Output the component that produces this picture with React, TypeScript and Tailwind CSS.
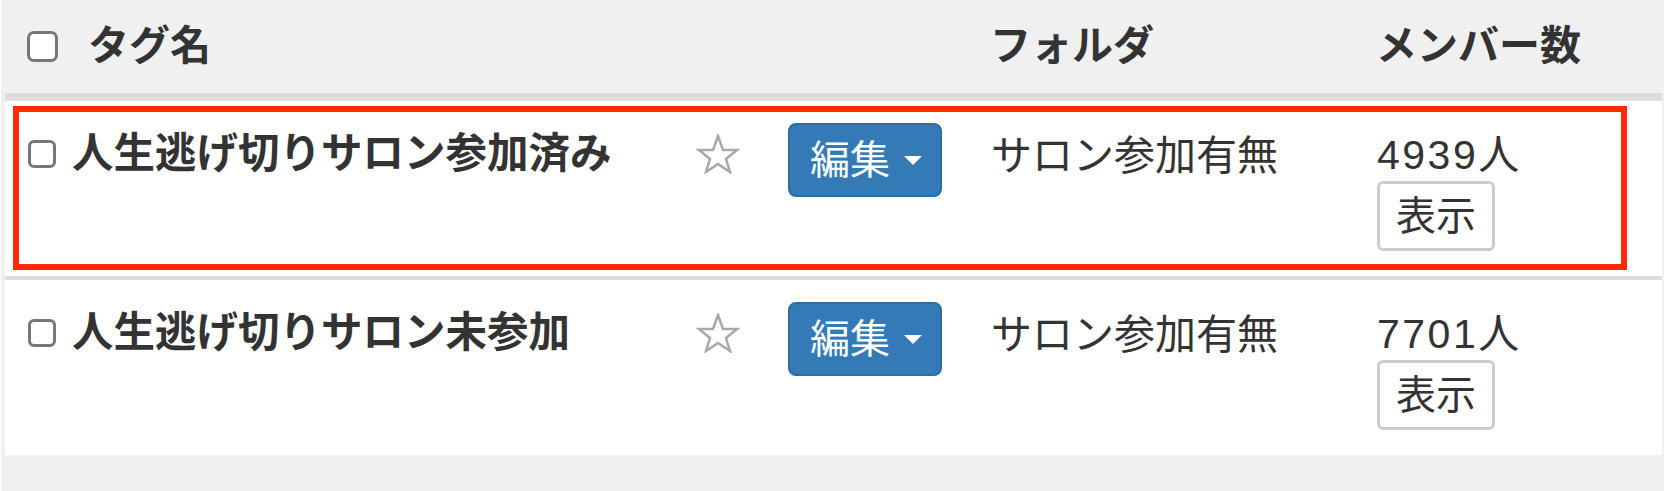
import type { ReactNode } from "react";

const font = {
  fontFamily: '"Liberation Sans", "Noto Sans CJK JP", sans-serif',
};

function Box({ big }: { big?: boolean }) {
  return (
    <div
      className={
        big
          ? "h-[31px] w-[31px] rounded-[7px] border-[3px] border-[#777] bg-white"
          : "h-[28px] w-[28px] rounded-[6px] border-[3px] border-[#777] bg-white"
      }
    />
  );
}

function Star() {
  return (
    <svg width="44" height="40" viewBox="0 0 44 40" className="mt-[11px]">
      <polygon
        points="22,2 27,16 41,16 30,25 34,38 22,30 10,38 14,25 3,16 17,16"
        fill="none"
        stroke="#a8a8a8"
        strokeWidth="2.5"
        strokeLinejoin="miter"
      />
    </svg>
  );
}

function EditButton() {
  return (
    <button className="flex h-[74px] w-[154px] items-center gap-[14px] rounded-[8px] border-2 border-[#2e6da4] bg-[#337ab7] pl-[20px] text-[40px] leading-none text-white">
      <span>編集</span>
      <span className="h-0 w-0 border-x-[9px] border-t-[9px] border-x-transparent border-t-white" />
    </button>
  );
}

function Row({ name, count, marked }: { name: string; count: string; marked?: boolean }) {
  return (
    <div className="relative ml-[4px] mr-[2px] bg-white">
      {marked && (
        <div className="pointer-events-none absolute left-[8px] top-[5px] h-[164px] w-[1614px] border-[6px] border-[#ff2a00]" />
      )}
      <div className="grid grid-cols-[668px_92px_203px_386px_1fr] items-start pl-[23px] pt-[22px] pb-[25px]">
        <div className="flex items-center gap-[16px] pt-[10px]">
          <Box />
          <span className="text-[41.5px] font-bold leading-none text-[#333]">{name}</span>
        </div>
        <Star />
        <EditButton />
        <div className="pt-[13px] text-[41px] leading-none text-[#333]">サロン参加有無</div>
        <div className="flex flex-col items-start">
          <div className="pt-[12px] text-[41px] leading-none text-[#333]">
            <span className="tracking-[2.5px]">{count.slice(0, -1)}</span>
            {count.slice(-1)}
          </div>
          <button className="mt-[5px] flex h-[70px] w-[118px] items-center justify-center rounded-[6px] border-[3px] border-[#ccc] bg-white text-[40px] leading-none text-[#333]">
            表示
          </button>
        </div>
      </div>
    </div>
  );
}

function Head({ children }: { children: ReactNode }) {
  return <div className="text-[41px] font-bold leading-none text-[#333]">{children}</div>;
}

export default function App() {
  return (
    <div className="min-h-[491px] bg-white" style={font}>
      <div className="ml-[1px] h-[491px] bg-[#f0f0f0]">
        <div className="grid h-[93px] grid-cols-[668px_92px_203px_386px_1fr] items-center pl-[26px]">
          <div className="flex items-center gap-[30px]">
            <Box big />
            <Head>タグ名</Head>
          </div>
          <div />
          <div />
          <Head>フォルダ</Head>
          <Head>メンバー数</Head>
        </div>
        <div className="ml-[4px] mr-[2px] h-[8px] bg-[#dddddd]" />
        <Row name="人生逃げ切りサロン参加済み" count="4939人" marked />
        <div className="ml-[4px] mr-[2px] h-[4px] bg-[#dddddd]" />
        <Row name="人生逃げ切りサロン未参加" count="7701人" />
      </div>
    </div>
  );
}
